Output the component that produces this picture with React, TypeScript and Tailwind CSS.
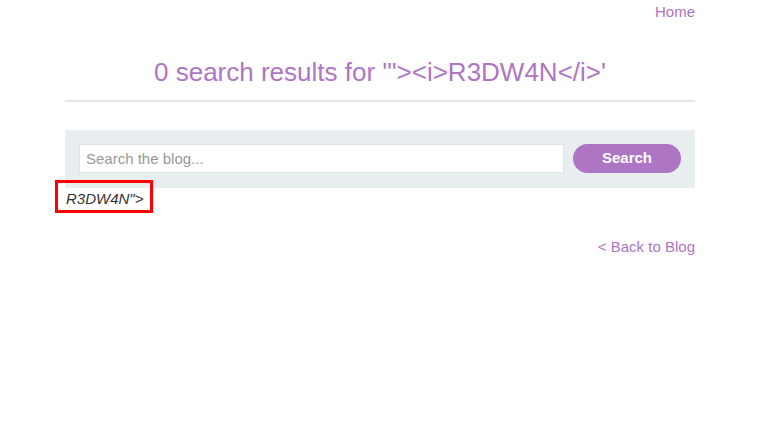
import React from "react";

const purple = "text-[#ae75c5]";

export default function App() {
  return (
    <div className="min-h-[423px] bg-white font-['Liberation_Sans',Arial,sans-serif]">
      <div className="ml-[65px] w-[630px]">
        <div className="flex justify-end pt-[3px]">
          <a className={`${purple} text-[15px] leading-[18px]`}>Home</a>
        </div>
        <h1 className={`${purple} mt-[36px] text-center text-[26px] leading-[30px]`}>
          0 search results for '"&gt;&lt;i&gt;R3DW4N&lt;/i&gt;'
        </h1>
        <hr className="mt-[13px] border-t-2 border-[#e6e6e6]" />
        <div className="mt-[28px] flex items-center gap-[9px] bg-[#e8edf0] px-[14px] pb-[15px] pt-[14px]">
          <input
            className="h-[29px] flex-1 border border-[#dde1e3] bg-white px-[6px] text-[15px] text-[#333] outline-none placeholder:text-[#999]"
            placeholder="Search the blog..."
          />
          <button className="h-[29px] w-[108px] rounded-full bg-[#ae75c5] text-[15px] font-bold text-white">
            Search
          </button>
        </div>
        <div className="relative">
          <p className="pt-[1px] pl-[1px] text-[15px] italic leading-[20px] text-[#333]">R3DW4N"&gt;</p>
          <div className="absolute left-[-10px] top-[-8px] h-[33px] w-[98px] border-[3px] border-[#ff0000]" />
        </div>
        <div className="mt-[29px] flex justify-end">
          <a className={`${purple} text-[15px] leading-[18px]`}>&lt; Back to Blog</a>
        </div>
      </div>
    </div>
  );
}
